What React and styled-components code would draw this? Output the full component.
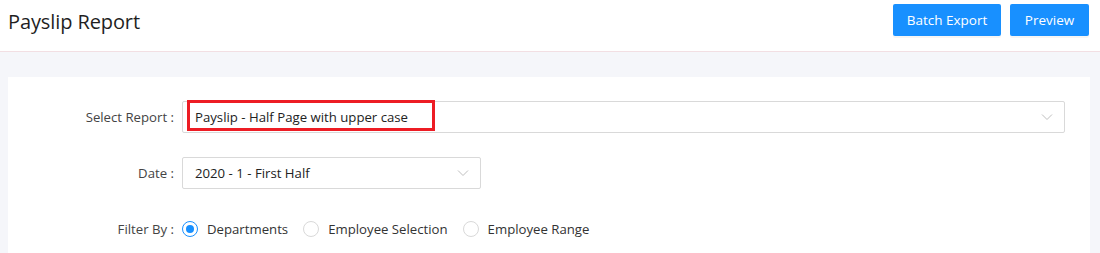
import React from "react"
import styled, { createGlobalStyle } from "styled-components"

const GlobalStyle = createGlobalStyle`
  body {
    margin: 0;
    background: #f5f6fa;
    font-family: "Open Sans", "Noto Sans", sans-serif;
    color: #333;
  }
`

const Page = styled.div`
  width: 1100px;
  height: 253px;
  overflow: hidden;
`

const Header = styled.div`
  height: 52px;
  background: #fff;
  border-bottom: 1px solid #f2dfe3;
  display: flex;
  align-items: center;
  justify-content: space-between;
  padding: 0 11px 0 8px;
  box-sizing: border-box;
`

const Title = styled.h1`
  margin: 0 0 8px;
  font-size: 20px;
  font-weight: 400;
  color: #1f1f1f;
  letter-spacing: -0.1px;
`

const Actions = styled.div`
  display: flex;
  gap: 9px;
  align-self: flex-start;
  margin-top: 4px;
`

const Button = styled.button`
  height: 32px;
  width: ${(p) => p.$w}px;
  padding: 0;
  border: none;
  border-radius: 2px;
  background: #1890ff;
  color: #fff;
  font-family: inherit;
  font-size: 13.5px;
  box-shadow: 0 2px 0 rgba(0, 0, 0, 0.04);
`

const Card = styled.div`
  margin: 25px 10px 0 8px;
  background: #fff;
  padding: 24px 0 0;
  height: 200px;
  box-sizing: border-box;
`

const Row = styled.div`
  display: flex;
  align-items: center;
  margin-bottom: ${(p) => p.$mb}px;
`

const Label = styled.div`
  width: 174px;
  text-align: right;
  font-size: 13.2px;
  color: #444;
  padding-right: 8px;
  box-sizing: border-box;
`

const Select = styled.div`
  position: relative;
  width: ${(p) => p.$w}px;
  height: 32px;
  border: 1px solid #d9d9d9;
  border-radius: 2px;
  box-sizing: border-box;
  display: flex;
  align-items: center;
  padding-left: 12px;
  font-size: 13.2px;
  color: #222;
`

const Highlight = styled.div`
  position: absolute;
  left: 4px;
  top: -2px;
  width: 248px;
  height: 31px;
  border: 3px solid #ed1c24;
  box-sizing: border-box;
`

const SelectText = styled.span`
  position: relative;
`

const Arrow = styled.svg`
  position: absolute;
  right: 11px;
  top: 50%;
  margin-top: -4px;
`

const Radios = styled.div`
  display: flex;
  align-items: center;
  gap: 15px;
`

const RadioItem = styled.label`
  display: flex;
  align-items: center;
  gap: 9px;
  font-size: 13.2px;
  color: #333;
`

const Circle = styled.span`
  width: 16px;
  height: 16px;
  border-radius: 50%;
  border: 1px solid ${(p) => (p.$on ? "#1890ff" : "#d9d9d9")};
  box-sizing: border-box;
  display: flex;
  align-items: center;
  justify-content: center;

  &::after {
    content: "";
    width: 8px;
    height: 8px;
    border-radius: 50%;
    background: #1890ff;
    display: ${(p) => (p.$on ? "block" : "none")};
  }
`

const Chevron = () => (
  <Arrow width="12" height="8" viewBox="0 0 12 8">
    <path d="M1 1.5 L6 6.5 L11 1.5" fill="none" stroke="#bfbfbf" strokeWidth="1" />
  </Arrow>
)

export default function App() {
  return (
    <Page>
      <GlobalStyle />
      <Header>
        <Title>Payslip Report</Title>
        <Actions>
          <Button $w={108}>Batch Export</Button>
          <Button $w={79}>Preview</Button>
        </Actions>
      </Header>
      <Card>
        <Row $mb={24}>
          <Label>Select Report :</Label>
          <Select $w={883}>
            <Highlight />
            <SelectText>Payslip - Half Page with upper case</SelectText>
            <Chevron />
          </Select>
        </Row>
        <Row $mb={31}>
          <Label>Date :</Label>
          <Select $w={299}>
            <SelectText>2020 - 1 - First Half</SelectText>
            <Chevron />
          </Select>
        </Row>
        <Row $mb={0}>
          <Label>Filter By :</Label>
          <Radios>
            <RadioItem>
              <Circle $on />
              Departments
            </RadioItem>
            <RadioItem>
              <Circle />
              Employee Selection
            </RadioItem>
            <RadioItem>
              <Circle />
              Employee Range
            </RadioItem>
          </Radios>
        </Row>
      </Card>
    </Page>
  )
}
